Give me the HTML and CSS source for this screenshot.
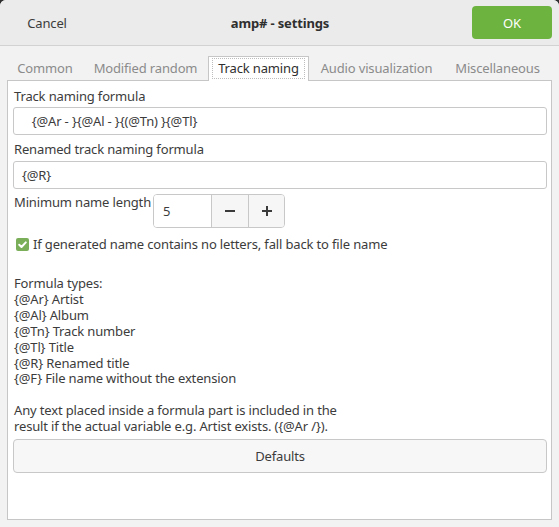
FILE: index.html
```html
<!DOCTYPE html>
<html>
<head>
<meta charset="utf-8">
<link rel="stylesheet" href="styles.css">
</head>
<body>
<div class="window">
  <header class="titlebar">
    <button class="btn-cancel">Cancel</button>
    <div class="title">amp# - settings</div>
    <button class="btn-ok">OK</button>
  </header>
  <nav class="tabs">
    <div class="tab tab-common">Common</div>
    <div class="tab tab-modified">Modified random</div>
    <div class="tab tab-track active"><span class="focus">Track naming</span></div>
    <div class="tab tab-audio">Audio visualization</div>
    <div class="tab tab-misc">Miscellaneous</div>
  </nav>
  <section class="panel">
    <div class="label label-first">Track naming formula</div>
    <div class="entry entry-first"><span class="pre">   {@Ar - }{@Al - }{(@Tn) }{@Tl}</span></div>
    <div class="label label-second">Renamed track naming formula</div>
    <div class="entry entry-second">{@R}</div>
    <div class="min-row">
      <div class="min-label">Minimum name length</div>
      <div class="spin">
        <div class="spin-value">5</div>
        <div class="spin-btn">
          <svg width="12" height="12" viewBox="0 0 12 12"><rect x="1" y="5" width="10" height="2" fill="#3a3a3a"/></svg>
        </div>
        <div class="spin-btn">
          <svg width="12" height="12" viewBox="0 0 12 12"><rect x="1" y="5" width="10" height="2" fill="#3a3a3a"/><rect x="5" y="1" width="2" height="10" fill="#3a3a3a"/></svg>
        </div>
      </div>
    </div>
    <div class="check-row">
      <span class="checkbox">
        <svg width="13" height="13" viewBox="0 0 13 13"><path d="M3.2 6.8 L5.5 9 L9.8 4.4" fill="none" stroke="#fff" stroke-width="2" stroke-linecap="round" stroke-linejoin="round"/></svg>
      </span>
      <span class="check-text">If generated name contains no letters, fall back to file name</span>
    </div>
    <div class="help">Formula types:
{@Ar} Artist
{@Al} Album
{@Tn} Track number
{@Tl} Title
{@R} Renamed title
{@F} File name without the extension

Any text placed inside a formula part is included in the
result if the actual variable e.g. Artist exists. ({@Ar /}).</div>
    <button class="btn-defaults">Defaults</button>
  </section>
</div>
</body>
</html>
```

FILE: styles.css
```css
html {
  background: #2e2e2e;
}
body {
  margin: 0;
  font-family: "Noto Sans", "DejaVu Sans", sans-serif;
  font-size: 13px;
  letter-spacing: -0.15px;
  color: #3c3c3c;
}
.window {
  background: #f2f2f2;
  height: 527px;
  border-radius: 6px 6px 0 0;
  overflow: hidden;
}
.titlebar {
  height: 45px;
  background: #ebebeb;
  border-bottom: 1px solid #d2d2d2;
  display: flex;
  align-items: center;
  justify-content: space-between;
  padding: 0 7px 0 6px;
}
button {
  font-family: inherit;
  font-size: 13px;
  letter-spacing: inherit;
  cursor: default;
}
.btn-cancel {
  width: 82px;
  height: 33px;
  border: none;
  background: transparent;
  color: #3c3c3c;
  padding: 0;
}
.title {
  font-weight: bold;
  color: #2f2f2f;
}
.btn-ok {
  width: 80px;
  height: 33px;
  border: none;
  border-radius: 4px;
  background: #6db33f;
  color: #ffffff;
  padding: 0;
}
.tabs {
  display: flex;
  padding: 10px 0 0 7px;
  height: 24px;
}
.tab {
  height: 25px;
  line-height: 25px;
  text-align: center;
  color: #8b8b8b;
  box-sizing: border-box;
  white-space: nowrap;
}
.tab-common { width: 76px; }
.tab-modified { width: 125px; }
.tab-track { width: 101px; }
.tab-audio { width: 135px; }
.tab-misc { width: 107px; }
.tab.active {
  position: relative;
  z-index: 1;
  background: #ffffff;
  border: 1px solid #c6c6c6;
  border-bottom: none;
  color: #2f2f2f;
  line-height: 23px;
  padding: 2px 3px 0 3px;
}
.focus {
  display: block;
  height: 19px;
  line-height: 19px;
  border: 1px dotted #bdbdbd;
  margin-top: -1px;
}
.panel {
  margin: 0 7px;
  height: 440px;
  box-sizing: border-box;
  background: #ffffff;
  border: 1px solid #c6c6c6;
  padding: 0 4px 0 5px;
  display: flex;
  flex-direction: column;
}
.label {
  line-height: 18px;
  padding-left: 1px;
  color: #3c3c3c;
}
.label-first { margin-top: 6px; }
.label-second { margin-top: 5px; }
.entry {
  height: 28px;
  box-sizing: border-box;
  border: 1px solid #c8c8c8;
  border-radius: 3px;
  line-height: 26px;
  padding-left: 8px;
  margin-top: 2px;
  color: #3c3c3c;
}
.entry-second { margin-top: 3px; }
.pre { white-space: pre; }
.min-row {
  display: flex;
  align-items: flex-start;
  margin-top: 5px;
}
.min-label {
  line-height: 16px;
  padding-left: 1px;
  width: 139px;
  white-space: nowrap;
}
.spin {
  display: flex;
  height: 34px;
  box-sizing: border-box;
  border: 1px solid #c8c8c8;
  border-radius: 4px;
  overflow: hidden;
}
.spin-value {
  width: 57px;
  line-height: 32px;
  padding-left: 9px;
  box-sizing: border-box;
  background: #ffffff;
}
.spin-btn {
  width: 36px;
  border-left: 1px solid #c8c8c8;
  background: #f6f6f6;
  display: flex;
  align-items: center;
  justify-content: center;
}
.spin-btn:last-child { width: 35px; }
.check-row {
  display: flex;
  align-items: center;
  margin-top: 8px;
  height: 16px;
  padding-left: 3px;
}
.checkbox {
  width: 13px;
  height: 13px;
  border-radius: 2px;
  background: #7aae59;
  display: flex;
  margin-right: 4px;
}
.help {
  white-space: pre;
  line-height: 15.9px;
  margin-top: 24px;
  padding-left: 1px;
}
.btn-defaults {
  margin-top: 4px;
  height: 34px;
  border: 1px solid #c8c8c8;
  border-radius: 4px;
  background: #f7f7f7;
  color: #3c3c3c;
}
```
